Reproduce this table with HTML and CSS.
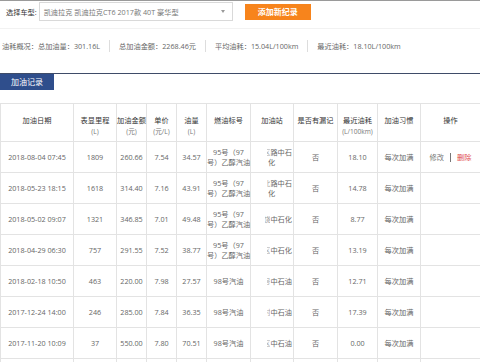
FILE: index.html
```html
<!DOCTYPE html>
<html lang="zh-CN">
<head>
    <meta charset="UTF-8">
    <meta name="viewport" content="width=device-width, initial-scale=1.0">
    <title>加油记录</title>
    <link rel="stylesheet" href="styles.css">
</head>
<body>
    <div class="page">
        <div class="toolbar">
            <label>选择车型:</label>
            <div class="select">
                <span>凯迪拉克 凯迪拉克CT6 2017款 40T 豪华型</span>
                <span class="caret"></span>
            </div>
            <button class="btn-add">添加新纪录</button>
        </div>

        <div class="summary">
            <span class="stat">油耗概况：总加油量：301.16L</span>
            <span class="stat">总加油金额：2268.46元</span>
            <span class="stat">平均油耗：15.04L/100km</span>
            <span class="stat">最近油耗：18.10L/100km</span>
        </div>

        <div class="tabbar"><span class="tab">加油记录</span></div>

        <table class="records">
            <colgroup>
                <col style="width:73px"><col style="width:43px"><col style="width:30px"><col style="width:30px">
                <col style="width:30px"><col style="width:44px"><col style="width:43px"><col style="width:44px">
                <col style="width:40px"><col style="width:43px"><col style="width:60px">
            </colgroup>
            <thead>
                <tr>
                    <th>加油日期</th>
                    <th>表显里程<span class="unit">(L)</span></th>
                    <th>加油金额<span class="unit">(元)</span></th>
                    <th>单价<span class="unit">(元/L)</span></th>
                    <th>油量<span class="unit">(L)</span></th>
                    <th>燃油标号</th>
                    <th>加油站</th>
                    <th>是否有漏记</th>
                    <th>最近油耗<span class="unit">(L/100km)</span></th>
                    <th>加油习惯</th>
                    <th>操作</th>
                </tr>
            </thead>
            <tbody>
                <tr>
                    <td>2018-08-04 07:45</td><td>1809</td><td>260.66</td><td>7.54</td><td>34.57</td>
                    <td class="fuel">95号（97<br>号）乙醇汽油</td>
                    <td class="station"><div><span class="frag">区</span>路中石</div><div class="tail">化</div></td>
                    <td>否</td><td>18.10</td><td>每次加满</td>
                    <td><span class="op-edit">修改</span><span class="sep"></span><span class="op-del">删除</span></td>
                </tr>
                <tr>
                    <td>2018-05-23 18:15</td><td>1618</td><td>314.40</td><td>7.16</td><td>43.91</td>
                    <td class="fuel">95号（97<br>号）乙醇汽油</td>
                    <td class="station"><div><span class="frag">北</span>路中石</div><div class="tail">化</div></td>
                    <td>否</td><td>14.78</td><td>每次加满</td><td></td>
                </tr>
                <tr>
                    <td>2018-05-02 09:07</td><td>1321</td><td>346.85</td><td>7.01</td><td>49.48</td>
                    <td class="fuel">95号（97<br>号）乙醇汽油</td>
                    <td class="station"><div><span class="frag wide">饶</span>中石化</div></td>
                    <td>否</td><td>8.77</td><td>每次加满</td><td></td>
                </tr>
                <tr>
                    <td>2018-04-29 06:30</td><td>757</td><td>291.55</td><td>7.52</td><td>38.77</td>
                    <td class="fuel">95号（97<br>号）乙醇汽油</td>
                    <td class="station"><div><span class="frag">区</span>中石化</div></td>
                    <td>否</td><td>13.19</td><td>每次加满</td><td></td>
                </tr>
                <tr>
                    <td>2018-02-18 10:50</td><td>463</td><td>220.00</td><td>7.98</td><td>27.57</td>
                    <td class="fuel">98号汽油</td>
                    <td class="station"><div><span class="frag">号</span>中石油</div></td>
                    <td>否</td><td>12.71</td><td>每次加满</td><td></td>
                </tr>
                <tr>
                    <td>2017-12-24 14:00</td><td>246</td><td>285.00</td><td>7.84</td><td>36.35</td>
                    <td class="fuel">98号汽油</td>
                    <td class="station"><div><span class="frag">村</span>中石油</div></td>
                    <td>否</td><td>17.39</td><td>每次加满</td><td></td>
                </tr>
                <tr>
                    <td>2017-11-20 10:09</td><td>37</td><td>550.00</td><td>7.80</td><td>70.51</td>
                    <td class="fuel">98号汽油</td>
                    <td class="station"><div><span class="frag">区</span>中石油</div></td>
                    <td>否</td><td>0.00</td><td>每次加满</td><td></td>
                </tr>
                <tr>
                    <td>2017-10-15 08:20</td><td>12</td><td>300.00</td><td>7.62</td><td>39.37</td>
                    <td class="fuel">98号汽油</td>
                    <td class="station"><div><span class="frag">区</span>中石油</div></td>
                    <td>否</td><td>0.00</td><td>每次加满</td><td></td>
                </tr>
            </tbody>
        </table>
    </div>
</body>
</html>
```

FILE: styles.css
```css
* {
    box-sizing: border-box;
}
body {
    margin: 0;
    font-family: "Open Sans", "Noto Sans CJK SC", sans-serif;
    font-size: 7.2px;
    color: #666;
    background-color: #fff;
}
.page {
    width: 480px;
    border-top: 1px solid #9a9a9a;
}
.toolbar {
    display: flex;
    align-items: center;
    padding: 1px 0 7px 6px;
    border-bottom: 1px solid #f2f2f2;
}
.toolbar label {
    color: #333;
    margin-right: 2px;
}
.select {
    display: flex;
    align-items: center;
    justify-content: space-between;
    width: 194px;
    height: 19px;
    padding: 0 7px 0 4px;
    border: 1px solid #d9d9d9;
    color: #777;
}
.caret {
    width: 0;
    height: 0;
    border-left: 2px solid transparent;
    border-right: 2px solid transparent;
    border-top: 3px solid #999;
}
.btn-add {
    margin-left: 12px;
    width: 66px;
    height: 16px;
    padding: 0;
    border: none;
    background-color: #f7841c;
    color: #fff;
    font-family: "Noto Sans CJK SC", sans-serif;
    font-size: 8px;
    font-weight: bold;
}
.summary {
    display: flex;
    padding: 11px 0 0 2px;
}
.stat {
    line-height: 12px;
    padding: 0 9px;
    border-left: 1px solid #ddd;
}
.stat:first-child {
    border-left: none;
    padding-left: 0;
}
.tabbar {
    margin-top: 21px;
    border-top: 1px solid #3f4c68;
}
.tab {
    display: inline-block;
    padding: 0 11px;
    line-height: 16px;
    background-color: #2f4e8c;
    color: #fff;
    font-size: 8px;
}
.records {
    width: 480px;
    margin-top: 13px;
    border-collapse: collapse;
    table-layout: fixed;
}
.records th,
.records td {
    border: 1px solid #e3e3e3;
    padding: 0;
    text-align: center;
}
.records th {
    height: 38px;
    padding-top: 11px;
    vertical-align: top;
    font-weight: normal;
    line-height: 11px;
    color: #333;
}
.records td {
    height: 31px;
    line-height: 10px;
    color: #666;
    white-space: nowrap;
}
.unit {
    display: block;
    font-size: 6.6px;
    color: #777;
}
.records td.station {
    text-align: right;
    padding-right: 1px;
    overflow: hidden;
}
.frag {
    display: inline-block;
    width: 3px;
    overflow: hidden;
    vertical-align: top;
    text-indent: -4px;
    color: #aaa;
}
.frag.wide {
    width: 5px;
    text-indent: -2px;
    color: #999;
}
.tail {
    text-align: left;
    padding-left: 17px;
}
.op-edit {
    color: #777;
}
.sep {
    display: inline-block;
    height: 9px;
    margin: 0 6px;
    border-left: 1px solid #777;
    vertical-align: middle;
}
.op-del {
    color: #e0474c;
}
```
